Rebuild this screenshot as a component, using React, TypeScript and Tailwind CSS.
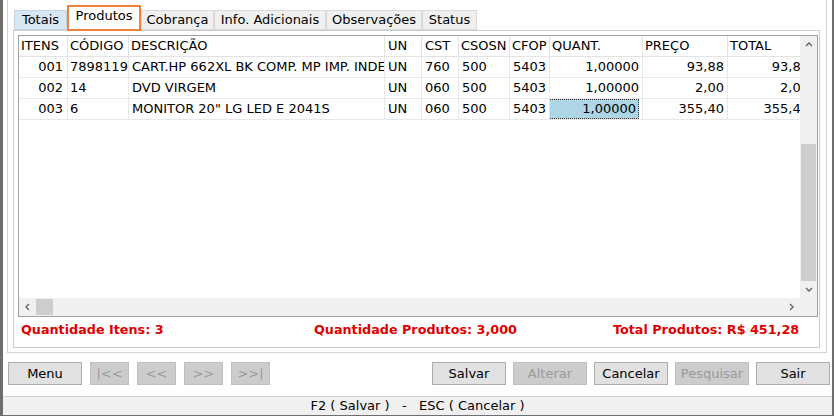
import React from 'react';

type Col = { label: string; w: string; cell: string; head: string };

const cols: Col[] = [
  { label: 'ITENS', w: 'w-[49px]', cell: 'justify-end pr-[4px]', head: 'pl-[2px]' },
  { label: 'CÓDIGO', w: 'w-[61px]', cell: 'pl-[2px]', head: 'pl-[2px]' },
  { label: 'DESCRIÇÃO', w: 'w-[256px]', cell: 'pl-[3px]', head: 'pl-[2px]' },
  { label: 'UN', w: 'w-[37px]', cell: 'pl-[3px]', head: 'pl-[3px]' },
  { label: 'CST', w: 'w-[37px]', cell: 'pl-[3px]', head: 'pl-[3px]' },
  { label: 'CSOSN', w: 'w-[51px]', cell: 'pl-[3px]', head: 'pl-[2px]' },
  { label: 'CFOP', w: 'w-[40px]', cell: 'justify-end pr-[3px]', head: 'pl-[2px]' },
  { label: 'QUANT.', w: 'w-[93px]', cell: 'justify-end pr-[3px]', head: 'pl-[2px]' },
  { label: 'PREÇO', w: 'w-[85px]', cell: 'justify-end pr-[3px]', head: 'pl-[2px]' },
  { label: 'TOTAL', w: 'w-[85px]', cell: 'justify-end pr-[3px]', head: 'pl-[2px]' },
];

const rows = [
  ['001', '7898119', 'CART.HP 662XL BK COMP. MP IMP. INDEX', 'UN', '760', '500', '5403', '1,00000', '93,88', '93,88'],
  ['002', '14', 'DVD VIRGEM', 'UN', '060', '500', '5403', '1,00000', '2,00', '2,00'],
  ['003', '6', 'MONITOR 20" LG LED E 2041S', 'UN', '060', '500', '5403', '1,00000', '355,40', '355,40'],
];

const tabs = [
  { label: 'Totais', cls: 'w-[53px] h-[20px] bg-[#d8e6f3] border border-[#c5d3e0]' },
  { label: 'Produtos', cls: 'w-[74px] h-[26px] bg-white border-2 border-[#f0833a] pb-[5px] relative z-10 -mb-px' },
  { label: 'Cobrança', cls: 'w-[73px] h-[20px] bg-[#f0f0f0] border border-[#d9d9d9]' },
  { label: 'Info. Adicionais', cls: 'w-[112px] h-[20px] bg-[#f0f0f0] border border-[#d9d9d9]' },
  { label: 'Observações', cls: 'w-[96px] h-[20px] bg-[#f0f0f0] border border-[#d9d9d9]' },
  { label: 'Status', cls: 'w-[55px] h-[20px] bg-[#f0f0f0] border border-[#d9d9d9]' },
];

function Chevron({ dir }: { dir: 'up' | 'down' | 'left' | 'right' }) {
  const pts = {
    up: '1,5 4,2 7,5',
    down: '1,2 4,5 7,2',
    left: '5,1 2,4 5,7',
    right: '2,1 5,4 2,7',
  }[dir];
  return (
    <svg width="8" height="8" viewBox="0 0 8 8">
      <polyline points={pts} fill="none" stroke="#606060" strokeWidth="1.3" />
    </svg>
  );
}

function Btn({ label, disabled, w = 'w-[74px]' }: { label: string; disabled?: boolean; w?: string }) {
  return (
    <div
      className={
        disabled
          ? `${w} h-[23px] flex items-center justify-center border border-[#bfbfbf] bg-[#cccccc] text-[#9a9a9a]`
          : `${w} h-[23px] flex items-center justify-center border border-[#adadad] bg-[#e1e1e1] text-black`
      }
    >
      {label}
    </div>
  );
}

export default function App() {
  return (
    <div
      className="w-[834px] h-[416px] bg-white border-l-[3px] border-r-[2px] border-b border-[#6e6e6e] flex flex-col text-[13px] text-black overflow-hidden"
      style={{ fontFamily: '"DejaVu Sans", Verdana, sans-serif' }}
    >
      {/* group box */}
      <div className="ml-[4px] w-[820px] h-[353px] shrink-0 border-l border-r border-b border-[#d4d4d4] flex flex-col">
        {/* tabs */}
        <div className="ml-[6px] mt-[5px] h-[25px] flex items-end">
          {tabs.map((t) => (
            <div key={t.label} className={`${t.cls} flex items-center justify-center whitespace-nowrap box-border`}>
              {t.label}
            </div>
          ))}
        </div>

        {/* tab panel */}
        <div className="ml-[5px] w-[807px] h-[318px] border border-[#cccccc] flex flex-col">
          {/* grid */}
          <div className="ml-[4px] mt-[4px] w-[800px] h-[282px] border border-[#a0a0a0] flex flex-col">
            <div className="flex h-[262px]">
              <div className="w-[781px] overflow-hidden">
                <div className="flex h-[21px] border-b border-[#e3e3e3] w-max">
                  {cols.map((c) => (
                    <div key={c.label} className={`${c.w} ${c.head} shrink-0 flex items-center border-r border-[#e3e3e3] whitespace-nowrap`}>
                      {c.label}
                    </div>
                  ))}
                </div>
                {rows.map((r, ri) => (
                  <div key={ri} className="flex h-[21px] border-b border-[#e8e8e8] w-max">
                    {r.map((v, ci) => {
                      const sel = ri === 2 && ci === 7;
                      return (
                        <div
                          key={ci}
                          className={`${cols[ci].w} ${cols[ci].cell} shrink-0 flex items-center border-r border-[#e8e8e8] whitespace-nowrap overflow-hidden`}
                        >
                          {sel ? (
                            <span className="-ml-px w-[92px] h-[20px] flex items-center justify-end pr-[2px] bg-[#acd6e6] border border-dotted border-[#333]">
                              {v}
                            </span>
                          ) : (
                            v
                          )}
                        </div>
                      );
                    })}
                  </div>
                ))}
              </div>
              {/* vertical scrollbar */}
              <div className="w-[17px] bg-[#f0f0f0] flex flex-col">
                <div className="h-[17px] flex items-center justify-center">
                  <Chevron dir="up" />
                </div>
                <div className="h-[91px]" />
                <div className="h-[137px] mx-[1px] bg-[#cdcdcd]" />
                <div className="h-[17px] flex items-center justify-center">
                  <Chevron dir="down" />
                </div>
              </div>
            </div>
            {/* horizontal scrollbar */}
            <div className="flex h-[18px]">
              <div className="w-[781px] bg-[#f0f0f0] flex items-center">
                <div className="w-[17px] h-full flex items-center justify-center">
                  <Chevron dir="left" />
                </div>
                <div className="w-[17px] h-[16px] bg-[#cdcdcd]" />
                <div className="flex-1" />
                <div className="w-[17px] h-full flex items-center justify-center">
                  <Chevron dir="right" />
                </div>
              </div>
              <div className="w-[17px] bg-[#f0f0f0]" />
            </div>
          </div>

          {/* totals */}
          <div className="flex items-center h-[24px] mt-[1px] pl-[7px] font-bold text-[12.75px] text-[#e00000] whitespace-nowrap">
            <div className="w-[293px]">Quantidade Itens: 3</div>
            <div className="w-[299px]">Quantidade Produtos: 3,000</div>
            <div>Total Produtos: R$ 451,28</div>
          </div>
        </div>
      </div>

      {/* buttons */}
      <div className="mt-[9px] pl-[5px] pr-[2px] flex items-center">
        <div className="flex gap-[8px]">
          <Btn label="Menu" />
          <Btn label="|<<" disabled w="w-[39px]" />
          <Btn label="<<" disabled w="w-[39px]" />
          <Btn label=">>" disabled w="w-[39px]" />
          <Btn label=">>|" disabled w="w-[39px]" />
        </div>
        <div className="ml-auto flex gap-[7px]">
          <Btn label="Salvar" />
          <Btn label="Alterar" disabled />
          <Btn label="Cancelar" />
          <Btn label="Pesquisar" disabled />
          <Btn label="Sair" />
        </div>
      </div>

      {/* status bar */}
      <div className="mt-auto h-[19px] border-t border-[#d4d4d4] bg-[#f0f0f0] flex items-center justify-center whitespace-pre">
        F2 ( Salvar )   -   ESC ( Cancelar )
      </div>
    </div>
  );
}
